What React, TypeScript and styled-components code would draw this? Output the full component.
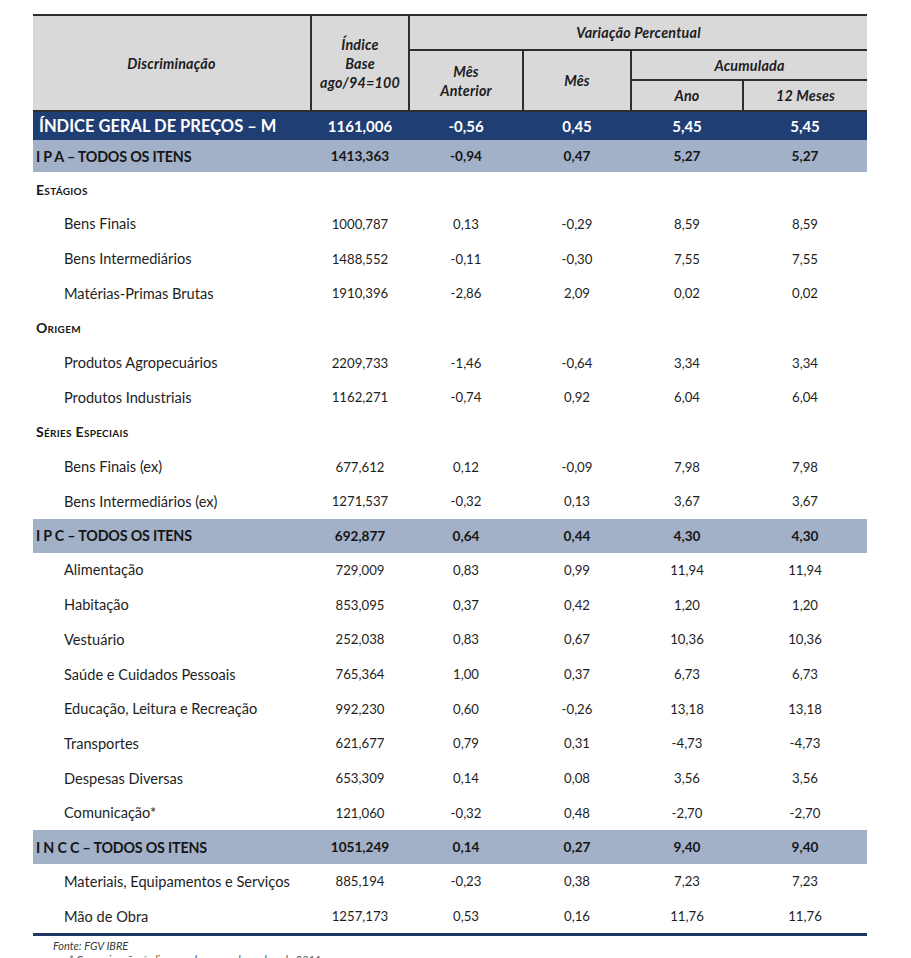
import styled, { createGlobalStyle } from 'styled-components';

const GlobalStyle = createGlobalStyle`
    body {
        margin: 0;
        background: #ffffff;
        font-family: Lato, "Open Sans", sans-serif;
        color: #1e1e1e;
    }
`;

const Page = styled.div`
    padding: 14px 0 0 33px;
    width: 834px;
`;

const Table = styled.table`
    width: 834px;
    border-collapse: collapse;
    table-layout: fixed;
`;

const HeadRow = styled.tr<{ $h: number }>`
    height: ${(p) => p.$h}px;
`;

const HeadCell = styled.th<{ $first?: boolean; $under?: boolean; $top?: boolean; $bottom?: boolean }>`
    background: #d9d9d9;
    color: #1d1d24;
    font-size: 14.3px;
    letter-spacing: 0.2px;
    font-style: italic;
    font-weight: 700;
    line-height: 19px;
    text-align: center;
    vertical-align: middle;
    padding: 0;
    border-left: ${(p) => (p.$first ? 'none' : '2px solid #2e2e2e')};
    border-top: ${(p) => (p.$top ? '2px solid #2e2e2e' : 'none')};
    border-bottom: ${(p) => (p.$bottom || p.$under ? '2px solid #2e2e2e' : 'none')};
`;

const TotalRow = styled.tr`
    height: 29px;
    background: #1f3e74;
    td {
        color: #ffffff;
        font-weight: 700;
        font-size: 15px;
    }
    td:first-child {
        font-size: 16.5px;
        padding-left: 6px;
    }
`;

const GroupRow = styled.tr<{ $h: number }>`
    height: ${(p) => p.$h}px;
    background: #a2b0c8;
    td {
        font-weight: 700;
        font-size: 13.6px;
        color: #161616;
    }
    td:first-child {
        font-size: 14.3px;
        padding-left: 3px;
        letter-spacing: -0.2px;
    }
`;

const SectionRow = styled.tr`
    height: 34.6px;
    td {
        font-weight: 700;
        font-size: 14px;
        letter-spacing: 0.3px;
        font-variant: small-caps;
        padding-left: 3px;
        color: #161616;
    }
`;

const ItemRow = styled.tr`
    height: 34.7px;
    td:first-child {
        padding-left: 31px;
        font-size: 14.6px;
    }
`;

const Cell = styled.td`
    font-size: 13.2px;
    text-align: center;
    padding: 0;
    white-space: nowrap;
`;

const Label = styled(Cell)`
    text-align: left;
`;

const Footer = styled.div`
    border-top: 3px solid #1f3864;
    padding: 3px 0 0 20px;
    font-size: 11px;
    font-style: italic;
    color: #3a3a3a;
    line-height: 14px;
`;

const Note = styled.div`
    padding-left: 16px;
    color: #555;
`;

type Item = [string, string, string, string, string, string];

interface Block {
    kind: 'group' | 'section' | 'item';
    row: Item;
}

const blocks: Block[] = [
    { kind: 'group', row: ['I P A – TODOS OS ITENS', '1413,363', '-0,94', '0,47', '5,27', '5,27'] },
    { kind: 'section', row: ['Estágios', '', '', '', '', ''] },
    { kind: 'item', row: ['Bens Finais', '1000,787', '0,13', '-0,29', '8,59', '8,59'] },
    { kind: 'item', row: ['Bens Intermediários', '1488,552', '-0,11', '-0,30', '7,55', '7,55'] },
    { kind: 'item', row: ['Matérias-Primas Brutas', '1910,396', '-2,86', '2,09', '0,02', '0,02'] },
    { kind: 'section', row: ['Origem', '', '', '', '', ''] },
    { kind: 'item', row: ['Produtos Agropecuários', '2209,733', '-1,46', '-0,64', '3,34', '3,34'] },
    { kind: 'item', row: ['Produtos Industriais', '1162,271', '-0,74', '0,92', '6,04', '6,04'] },
    { kind: 'section', row: ['Séries Especiais', '', '', '', '', ''] },
    { kind: 'item', row: ['Bens Finais (ex)', '677,612', '0,12', '-0,09', '7,98', '7,98'] },
    { kind: 'item', row: ['Bens Intermediários (ex)', '1271,537', '-0,32', '0,13', '3,67', '3,67'] },
    { kind: 'group', row: ['I P C – TODOS OS ITENS', '692,877', '0,64', '0,44', '4,30', '4,30'] },
    { kind: 'item', row: ['Alimentação', '729,009', '0,83', '0,99', '11,94', '11,94'] },
    { kind: 'item', row: ['Habitação', '853,095', '0,37', '0,42', '1,20', '1,20'] },
    { kind: 'item', row: ['Vestuário', '252,038', '0,83', '0,67', '10,36', '10,36'] },
    { kind: 'item', row: ['Saúde e Cuidados Pessoais', '765,364', '1,00', '0,37', '6,73', '6,73'] },
    { kind: 'item', row: ['Educação, Leitura e Recreação', '992,230', '0,60', '-0,26', '13,18', '13,18'] },
    { kind: 'item', row: ['Transportes', '621,677', '0,79', '0,31', '-4,73', '-4,73'] },
    { kind: 'item', row: ['Despesas Diversas', '653,309', '0,14', '0,08', '3,56', '3,56'] },
    { kind: 'item', row: ['Comunicação*', '121,060', '-0,32', '0,48', '-2,70', '-2,70'] },
    { kind: 'group', row: ['I N C C – TODOS OS ITENS', '1051,249', '0,14', '0,27', '9,40', '9,40'] },
    { kind: 'item', row: ['Materiais, Equipamentos e Serviços', '885,194', '-0,23', '0,38', '7,23', '7,23'] },
    { kind: 'item', row: ['Mão de Obra', '1257,173', '0,53', '0,16', '11,76', '11,76'] },
];

function Values({ row }: { row: Item }) {
    return (
        <>
            <Label>{row[0]}</Label>
            {row.slice(1).map((v, i) => (
                <Cell key={i}>{v}</Cell>
            ))}
        </>
    );
}

function App() {
    return (
        <>
            <GlobalStyle />
            <Page>
                <Table>
                    <colgroup>
                        <col style={{ width: 278 }} />
                        <col style={{ width: 98 }} />
                        <col style={{ width: 114 }} />
                        <col style={{ width: 108 }} />
                        <col style={{ width: 112 }} />
                        <col style={{ width: 124 }} />
                    </colgroup>
                    <thead>
                        <HeadRow $h={35}>
                            <HeadCell $first $top $bottom rowSpan={3}>Discriminação</HeadCell>
                            <HeadCell $top $bottom rowSpan={3}>
                                Índice
                                <br />
                                Base
                                <br />
                                ago/94=100
                            </HeadCell>
                            <HeadCell $top $under colSpan={4}>Variação Percentual</HeadCell>
                        </HeadRow>
                        <HeadRow $h={30}>
                            <HeadCell $bottom rowSpan={2}>
                                Mês
                                <br />
                                Anterior
                            </HeadCell>
                            <HeadCell $bottom rowSpan={2}>Mês</HeadCell>
                            <HeadCell $under colSpan={2}>Acumulada</HeadCell>
                        </HeadRow>
                        <HeadRow $h={31}>
                            <HeadCell $bottom>Ano</HeadCell>
                            <HeadCell $bottom>12 Meses</HeadCell>
                        </HeadRow>
                    </thead>
                    <tbody>
                        <TotalRow>
                            <Values row={['ÍNDICE GERAL DE PREÇOS – M', '1161,006', '-0,56', '0,45', '5,45', '5,45']} />
                        </TotalRow>
                        {blocks.map((b, i) => {
                            if (b.kind === 'group')
                                return (
                                    <GroupRow key={i} $h={i === 0 ? 32 : 34}>
                                        <Values row={b.row} />
                                    </GroupRow>
                                );
                            if (b.kind === 'section')
                                return (
                                    <SectionRow key={i}>
                                        <Label colSpan={6}>{b.row[0]}</Label>
                                    </SectionRow>
                                );
                            return (
                                <ItemRow key={i}>
                                    <Values row={b.row} />
                                </ItemRow>
                            );
                        })}
                    </tbody>
                </Table>
                <Footer>
                    Fonte: FGV IBRE
                    <Note>* Comunicação: índice com base em dezembro de 2011</Note>
                </Footer>
            </Page>
        </>
    );
}

export default App;
